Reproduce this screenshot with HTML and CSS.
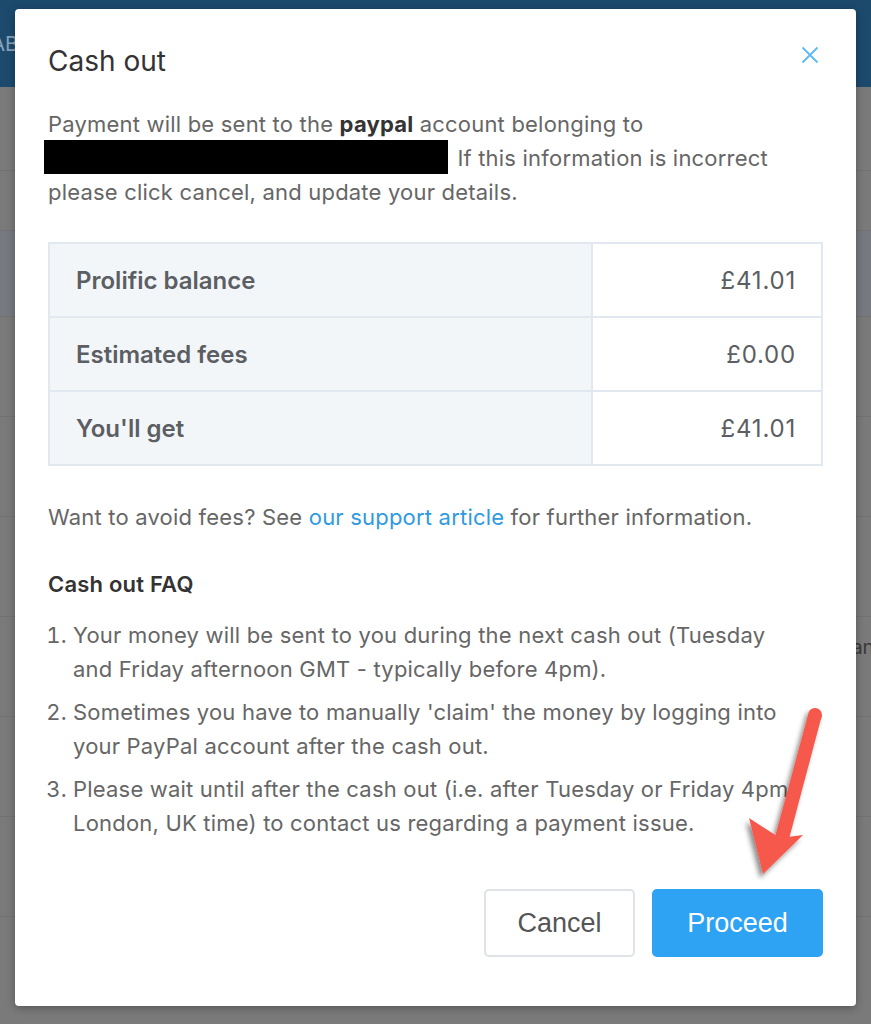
FILE: index.html
```html
<!DOCTYPE html>
<html lang="en">
<head>
    <meta charset="UTF-8">
    <meta name="viewport" content="width=device-width, initial-scale=1.0">
    <title>Cash out</title>
    <link rel="stylesheet" href="styles.css">
</head>
<body>
    <!-- Pagina de fondo, tapada por el modal -->
    <div class="page">
        <header class="topbar">
            <span class="brand">LAB</span>
        </header>
        <div class="row"></div>
        <div class="row row-short"></div>
        <div class="row row-blue"></div>
        <div class="row"></div>
        <div class="row"></div>
        <div class="row"></div>
        <div class="row"><span class="row-text">Transfer</span></div>
        <div class="row"></div>
        <div class="row"></div>
    </div>

    <div class="backdrop">
        <div class="modal">
            <div class="modal-header">
                <h1>Cash out</h1>
                <button class="close" aria-label="Close">
                    <svg width="18" height="18" viewBox="0 0 18 18">
                        <path d="M1.5 1.5 L16.5 16.5 M16.5 1.5 L1.5 16.5" stroke="#5db9f6" stroke-width="1.8" fill="none"/>
                    </svg>
                </button>
            </div>

            <p class="intro">
                Payment will be sent to the <strong>paypal</strong> account belonging to
                <span class="redacted"></span> If this information is incorrect
                please click cancel, and update your details.
            </p>

            <table class="summary">
                <tr>
                    <th>Prolific balance</th>
                    <td>£41.01</td>
                </tr>
                <tr>
                    <th>Estimated fees</th>
                    <td>£0.00</td>
                </tr>
                <tr>
                    <th>You'll get</th>
                    <td>£41.01</td>
                </tr>
            </table>

            <p class="note">Want to avoid fees? See <a href="#">our support article</a> for further information.</p>

            <h2>Cash out FAQ</h2>
            <ol class="faq">
                <li>Your money will be sent to you during the next cash out (Tuesday and Friday afternoon GMT - typically before 4pm).</li>
                <li>Sometimes you have to manually 'claim' the money by logging into your PayPal account after the cash out.</li>
                <li>Please wait until after the cash out (i.e. after Tuesday or Friday 4pm London, UK time) to contact us regarding a payment issue.</li>
            </ol>

            <div class="actions">
                <button class="btn btn-cancel">Cancel</button>
                <button class="btn btn-proceed">Proceed</button>
            </div>
        </div>
    </div>

    <!-- Flecha roja de la captura -->
    <svg class="arrow" width="100" height="200" viewBox="0 0 100 200">
        <defs>
            <filter id="shadow" x="-40%" y="-30%" width="180%" height="160%">
                <feDropShadow dx="-3" dy="4" stdDeviation="2.5" flood-color="#000" flood-opacity="0.45"/>
            </filter>
        </defs>
        <g filter="url(#shadow)" fill="#f6584b">
            <path d="M68 18 L82 18 L49 142 L35 140 Z"/>
            <circle cx="75" cy="18" r="7"/>
            <polygon points="23,177 9,121 40,141 63,138"/>
        </g>
    </svg>
</body>
</html>
```

FILE: styles.css
```css
* {
    margin: 0;
    padding: 0;
    box-sizing: border-box;
}

body {
    font-family: Inter, "Noto Sans", sans-serif;
    background-color: #7a7a7a;
    color: #666;
    width: 871px;
    height: 1024px;
    overflow: hidden;
    position: relative;
}

/* Fondo */
.page {
    width: 100%;
}

.topbar {
    height: 87px;
    background-color: #1c4a6d;
    display: flex;
    align-items: center;
}

.brand {
    color: #8aa3b8;
    font-size: 20px;
    margin-left: -20px;
}

.row {
    height: 100px;
    border-bottom: 1px solid #727272;
    position: relative;
}

.row:first-of-type {
    height: 84px;
}

.row-short {
    height: 60px;
}

.row-blue {
    height: 86px;
    background-color: #767a80;
}

.row-text {
    position: absolute;
    right: -40px;
    top: 18px;
    font-size: 20px;
    color: #3a3a3a;
}

/* Modal */
.backdrop {
    position: absolute;
    top: 0;
    left: 0;
    right: 0;
    bottom: 0;
    display: flex;
    justify-content: center;
    padding-top: 9px;
}

.modal {
    width: 841px;
    height: 997px;
    background-color: white;
    border-radius: 4px;
    box-shadow: 0 2px 8px rgba(0, 0, 0, 0.3);
    padding: 32px 33px 0;
    font-size: 22px;
    letter-spacing: 0.2px;
}

.modal-header {
    display: flex;
    justify-content: space-between;
    align-items: center;
    height: 40px;
}

h1 {
    font-size: 28px;
    font-weight: 400;
    letter-spacing: 0;
    color: #333;
}

.close {
    background: none;
    border: none;
    padding: 0;
    margin-right: 4px;
    margin-top: -12px;
    display: flex;
}

.intro {
    margin-top: 26px;
    line-height: 34px;
}

.intro strong {
    color: #333;
    font-weight: 700;
}

.redacted {
    display: inline-block;
    width: 404px;
    height: 34px;
    background-color: #000;
    vertical-align: top;
    margin-left: -4px;
    margin-right: 3px;
    position: relative;
    top: -1px;
}

.summary {
    margin-top: 33px;
    width: 775px;
    border-collapse: collapse;
    font-size: 24px;
    color: #5b5e62;
}

.summary th,
.summary td {
    height: 74px;
    border: 2px solid #e2e8ef;
}

.summary th {
    width: 543px;
    text-align: left;
    font-weight: 600;
    letter-spacing: 0;
    background-color: #f3f6f9;
    padding-left: 26px;
}

.summary td {
    text-align: right;
    padding-right: 25px;
    letter-spacing: 0.8px;
}

.note {
    margin-top: 34px;
    line-height: 34px;
}

.note a {
    color: #2f9ae0;
    text-decoration: none;
}

h2 {
    margin-top: 33px;
    font-size: 22px;
    font-weight: 600;
    line-height: 34px;
    color: #333;
}

.faq {
    margin-top: 17px;
    padding-left: 25px;
    padding-right: 30px;
    line-height: 34px;
}

.faq li + li {
    margin-top: 9px;
}

.actions {
    margin-top: 49px;
    display: flex;
    justify-content: flex-end;
    gap: 17px;
}

.btn {
    height: 68px;
    border-radius: 5px;
    font-family: "Liberation Sans", Arial, sans-serif;
    font-size: 27px;
    cursor: pointer;
}

.btn-cancel {
    width: 151px;
    background-color: white;
    border: 2px solid #dfe2e6;
    color: #555;
}

.btn-proceed {
    width: 171px;
    background-color: #2ea2f3;
    border: none;
    color: white;
}

.arrow {
    position: absolute;
    left: 740px;
    top: 697px;
}
```
